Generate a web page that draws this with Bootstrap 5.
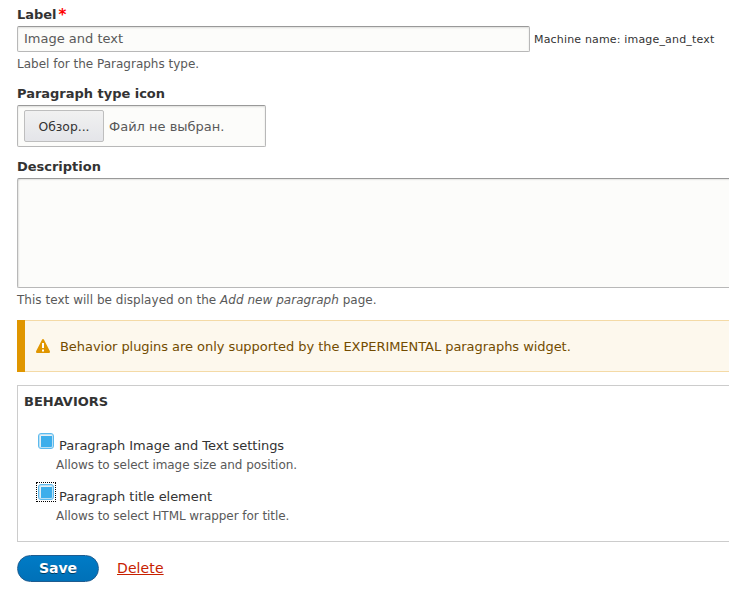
<!DOCTYPE html>
<html lang="en">
<head>
<meta charset="utf-8">
<meta name="viewport" content="width=device-width, initial-scale=1">
<title>Edit paragraph type</title>
<link href="https://cdn.jsdelivr.net/npm/bootstrap@5.3.0/dist/css/bootstrap.min.css" rel="stylesheet">
<style>
body { font-family: "DejaVu Sans", sans-serif; font-size: 13px; line-height: 20px; color: #333; background: #fff; overflow: hidden; }
.edit-form { padding: 5px 0 0 17px; }
.field-group { margin-top: 10px; }
.field-title { display: block; font-weight: 700; height: 21px; margin: 0; letter-spacing: -.02px; }
.req-star { display: inline-block; color: #f00; font-size: 15px; line-height: 1; vertical-align: -1px; margin-left: 2px; }
.field-box, .field-box:focus { border: 1px solid #b8b8b8; border-top-color: #999; border-radius: 2px; background: #fcfcfa; color: #595959; font-size: 13px; box-shadow: inset 0 1px 2px rgba(0,0,0,.125); }
.name-box { width: 513px; height: 26px; padding: 2px 6px 3px; line-height: 19px; }
.machine-name { font-size: 11px; letter-spacing: .17px; margin: 2px 0 0 4px; white-space: nowrap; }
.help { font-size: 12px; color: #595959; line-height: 20px; white-space: nowrap; margin-top: 2px; }
.desc-help { letter-spacing: .03px; }
.file-box { width: 249px; height: 42px; padding: 0 6px; }
.file-status { margin: 1px 0 0 5px; }
.browse-btn, .browse-btn:hover { width: 80px; height: 32px; padding: 1px 0 0; border: 1px solid #bebebe; border-radius: 2px; background: linear-gradient(#f1f1f1, #e4e5e9); color: #333; font-size: 12.35px; line-height: 30px; }
.desc-box, .desc-box:focus { height: 110px; resize: none; border-right: 0; border-radius: 2px 0 0 2px; box-shadow: inset 1px 1px 2px -1px rgba(0,0,0,.3); }
.warn-box { height: 52px; margin: 10px 0 0 8px; padding: 0 0 0 11px; background: #fdf8ed; border: 1px solid #f4daa6; border-right: 0; border-left: 0; border-radius: 0; color: #734c00; box-shadow: -8px 0 0 #e09600; }
.warn-text { margin: 2px 0 0 10px; letter-spacing: -.05px; }
.behaviors { height: 157px; margin-top: 13px; border: 1px solid #ccc; border-right: 0; padding: 6px 6px 0; }
.behaviors-title { font-size: 13px; font-weight: 700; line-height: 20px; margin: 0 0 21px; }
.behavior { height: 51px; padding-left: 14px; }
.behavior label { line-height: 20px; margin: 2px 0 0 5px; padding-top: 1px; letter-spacing: -.04px; }
.behavior .help { padding-left: 18px; line-height: 17px; margin-top: 2px; letter-spacing: -.06px; }
.behavior-head { height: 22px; }
.tick-frame { width: 16px; height: 16px; display: block; flex: none; }
.tick, .tick:checked { display: block; appearance: none; width: 16px; height: 16px; margin: 0; border: 1px solid #5cbaee; border-radius: 3px; background: linear-gradient(#3daeeb, #3daeeb) 1.500px 1.500px / 11px 11px no-repeat #e8eff3; box-shadow: inset 0 0 0 1px #b9e0f5; }
.tick-focused { outline: 1px dotted #000; outline-offset: 1px; }
.save-row { margin-top: 13px; }
.save-btn, .save-btn:hover { width: 82px; height: 27px; padding: 0; border: 1px solid #1e5c90; border-radius: 20px; background: linear-gradient(#007bc6, #0071b8); color: #fff; font-size: 14px; font-weight: 700; line-height: 25px; text-shadow: 0 1px rgba(0,0,0,.5); }
.delete-link, .delete-link:hover { color: #c72100; font-size: 14px; letter-spacing: .1px; line-height: 27px; margin-left: 18px; text-underline-offset: 1px; }
</style>
</head>
<body>
<form class="edit-form">
  <div>
    <label class="field-title" for="label">Label<span class="req-star">*</span></label>
    <div class="d-flex align-items-center">
      <input id="label" class="form-control field-box name-box" type="text" value="Image and text">
      <span class="machine-name">Machine name: image_and_text</span>
    </div>
    <div class="help">Label for the Paragraphs type.</div>
  </div>
  <div class="field-group">
    <div class="field-title">Paragraph type icon</div>
    <div class="field-box file-box d-flex align-items-center">
      <button type="button" class="btn browse-btn">Обзор...</button>
      <span class="file-status">Файл не выбран.</span>
    </div>
  </div>
  <div class="field-group">
    <label class="field-title" for="description">Description</label>
    <textarea id="description" class="form-control field-box desc-box"></textarea>
    <div class="help desc-help">This text will be displayed on the <em>Add new paragraph</em> page.</div>
  </div>
  <div class="alert warn-box d-flex align-items-center" role="alert">
    <svg width="14" height="14" viewBox="0 0 14 14" aria-hidden="true"><path fill="#e09600" d="M6 .7C6.400-.1 7.600-.1 8 .7l5.800 11.200c.4.9 0 2.100-1 2.100H1.200c-1 0-1.400-1.200-1-2.100z"/><path fill="#fff" d="M6 4h2v5H6zM6 10.500h2v2H6z"/></svg>
    <span class="warn-text">Behavior plugins are only supported by the EXPERIMENTAL paragraphs widget.</span>
  </div>
  <div class="behaviors">
    <h2 class="behaviors-title text-uppercase">Behaviors</h2>
    <div class="behavior">
      <div class="behavior-head d-flex align-items-start">
        <span class="tick-frame"><input class="tick" type="checkbox" id="settings" checked></span><label for="settings">Paragraph Image and Text settings</label>
      </div>
      <div class="help">Allows to select image size and position.</div>
    </div>
    <div class="behavior">
      <div class="behavior-head d-flex align-items-start">
        <span class="tick-frame tick-focused"><input class="tick" type="checkbox" id="title" checked></span><label for="title">Paragraph title element</label>
      </div>
      <div class="help">Allows to select HTML wrapper for title.</div>
    </div>
  </div>
  <div class="save-row d-flex align-items-start">
    <button type="button" class="btn save-btn">Save</button>
    <a class="delete-link" href="#">Delete</a>
  </div>
</form>
<script src="https://cdn.jsdelivr.net/npm/bootstrap@5.3.0/dist/js/bootstrap.bundle.min.js"></script>
</body>
</html>
